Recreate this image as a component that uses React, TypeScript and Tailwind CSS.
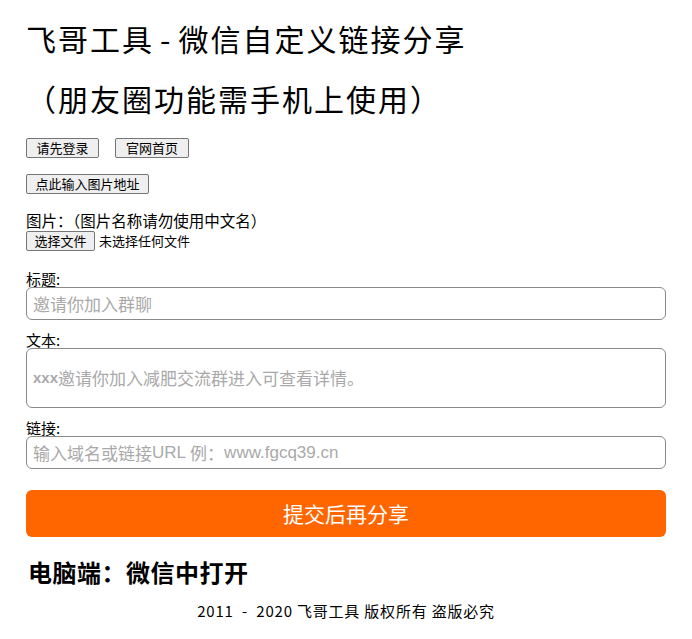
import React from "react";

const cjk = { fontFamily: '"Noto Sans CJK SC", sans-serif' };
const latin = { fontFamily: '"Liberation Sans", "Noto Sans CJK SC", sans-serif' };

export default function App() {
  return (
    <div className="bg-white text-black w-[692px] min-h-[639px] px-[26px]" style={cjk}>
      <h1 className="text-[30px] leading-[40px] pt-[18px] m-0 font-normal tracking-[2px]">飞哥工具<span className="px-[6px]">-</span>微信自定义链接分享</h1>
      <h1 className="text-[30px] leading-[40px] mt-[20px] m-0 font-normal tracking-[2px]">（朋友圈功能需手机上使用）</h1>
      <div className="flex gap-[16px] mt-[20px]">
        <button className="h-[20px] w-[73px] text-[13px] leading-[18px] bg-[#efefef] border border-[#767676] rounded-[2px] flex items-center justify-center">请先登录</button>
        <button className="h-[20px] w-[74px] text-[13px] leading-[18px] bg-[#efefef] border border-[#767676] rounded-[2px] flex items-center justify-center">官网首页</button>
      </div>
      <div className="mt-[16px]">
        <button className="h-[20px] w-[123px] text-[13px] leading-[18px] bg-[#efefef] border border-[#767676] rounded-[2px] flex items-center justify-center">点此输入图片地址</button>
      </div>
      <div className="mt-[17px] text-[15.5px] leading-[18px]">图片：（图片名称请勿使用中文名）</div>
      <div className="flex items-center gap-[4px] text-[13px] mt-[2px]">
        <button className="h-[20px] w-[69px] text-[13px] leading-[18px] bg-[#efefef] border border-[#767676] rounded-[2px] flex items-center justify-center">选择文件</button>
        <span>未选择任何文件</span>
      </div>
      <div className="mt-[19px] text-[15px] leading-[17px]">标题:</div>
      <div className="h-[33px] border border-[#8a8a8a] rounded-[6px] flex items-center px-[6px] text-[17px] text-[#a9a9a9]">邀请你加入群聊</div>
      <div className="mt-[11px] text-[15px] leading-[17px]">文本:</div>
      <div className="h-[60px] border border-[#8a8a8a] rounded-[6px] flex items-center px-[6px] text-[17px] text-[#a9a9a9]">
        <span className="font-bold text-[15px]" style={latin}>xxx</span>邀请你加入减肥交流群进入可查看详情。
      </div>
      <div className="mt-[11px] text-[15px] leading-[17px]">链接:</div>
      <div className="h-[33px] border border-[#8a8a8a] rounded-[6px] flex items-center px-[6px] text-[17px] text-[#a9a9a9] whitespace-pre">
        输入域名或链接<span style={latin}>URL </span>例：<span style={latin}>www.fgcq39.cn</span>
      </div>
      <button className="mt-[21px] w-full h-[47px] bg-[#ff6600] rounded-[6px] text-white text-[21px] flex items-center justify-center">提交后再分享</button>
      <div className="mt-[20px] pl-[2px] text-[24px] leading-[30px] font-bold tracking-[0.5px]">电脑端：微信中打开</div>
      <div className="mt-[14px] text-center text-[15px] leading-[20px] whitespace-pre tracking-[0.8px]">2011  -  2020 飞哥工具 版权所有 盗版必究</div>
    </div>
  );
}
